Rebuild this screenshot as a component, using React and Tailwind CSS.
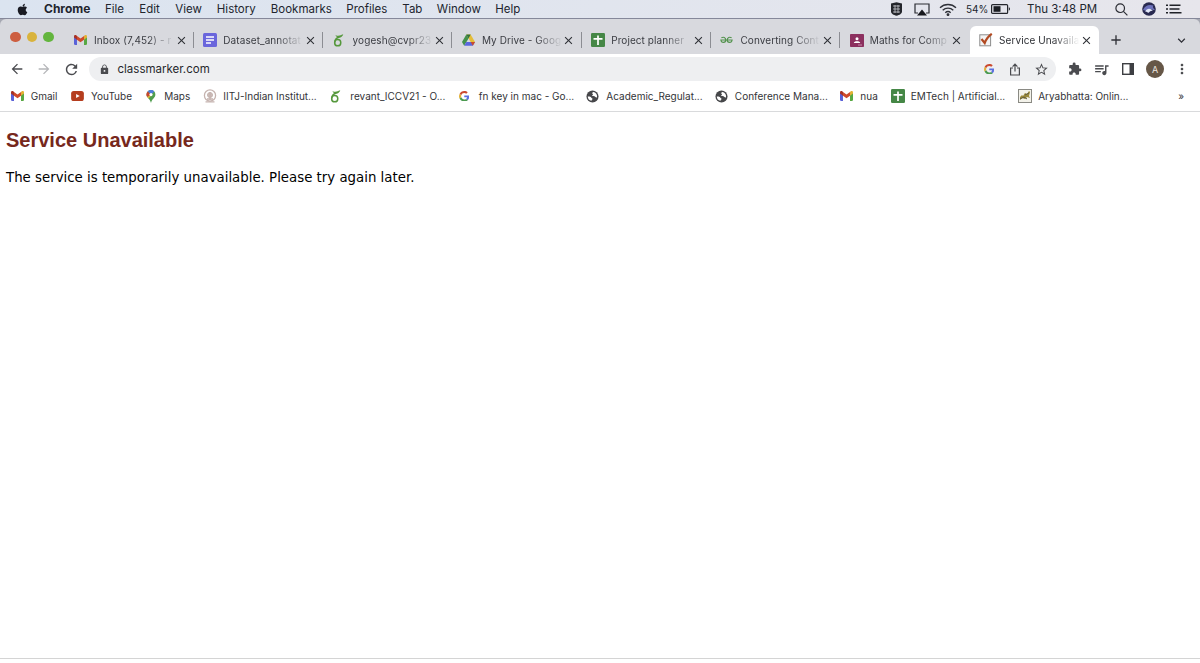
import React from 'react';
import clsx from 'clsx';
import { FaApple } from 'react-icons/fa';
import {
    MdAdd,
    MdArrowBack,
    MdArrowForward,
    MdClose,
    MdExpandMore,
    MdExtension,
    MdLock,
    MdMoreVert,
    MdQueueMusic,
    MdRefresh,
    MdStarBorder,
} from 'react-icons/md';

const GmailIcon = () => (
    <svg viewBox="0 0 24 18" className="w-[13px] h-[10px]">
        <path d="M0 2v14.500c0 .8.7 1.500 1.600 1.500H5.500V7z" fill="#5a62d8" />
        <path d="M18.500 7v11h3.900c.9 0 1.600-.7 1.600-1.500V2z" fill="#57a843" />
        <path d="M18.500 1.500V8.500L24 4.500V2.400c0-2.200-2.500-3.200-4.200-2z" fill="#e3b135" />
        <path d="M5.500 8.500V1.500L12 6.300l6.500-4.800v7L12 13.300z" fill="#cf4a2b" />
        <path d="M0 2.400v2.100l5.500 4v-7L4.200.4C2.500-.8 0 .2 0 2.400z" fill="#a83224" />
    </svg>
);

const DocsIcon = () => (
    <svg viewBox="0 0 14 14" className="size-[14px]">
        <rect width="14" height="14" rx="1.500" fill="#6a66dc" />
        <path d="M3 4h8M3 7h8M3 10h5" stroke="#fff" strokeWidth="1.300" />
    </svg>
);

const OverleafIcon = () => (
    <svg viewBox="0 0 14 16" className="w-[11px] h-[13px]" fill="none" stroke="#55983c">
        <ellipse cx="6" cy="10.800" rx="3.900" ry="4" strokeWidth="1.900" />
        <path d="M2.200 10.500C2 6.500 5 4.500 8 3.500" strokeWidth="1.900" />
        <path d="M3.500 1.800c3 .8 6 .5 9-1.300-.8 3-3.500 4.200-6.500 3.400z" fill="#55983c" strokeWidth=".6" />
    </svg>
);

const DriveIcon = () => (
    <svg viewBox="0 0 24 22" className="w-[13px] h-[12px]">
        <path d="M8 1h8l8 13.500h-8z" fill="#e5bd38" />
        <path d="M8 1l4 7L4 21.500 0 14.500z" fill="#43914b" />
        <path d="M8 14.500h16L20 21.500H4z" fill="#5a67df" />
        <path d="M16 14.500h8L20 21.500z" fill="#ca4b2d" />
        <path d="M8 1h8l-4 7z" fill="#34713a" />
    </svg>
);

const SheetsIcon = () => (
    <svg viewBox="0 0 14 14" className="size-[14px]">
        <rect width="14" height="14" rx="1.200" fill="#458746" />
        <path d="M7 2.500v9.500M2.500 5.800h9" stroke="#fff" strokeWidth="1.700" />
    </svg>
);

const GeeksIcon = () => (
    <svg viewBox="0 0 14 8" className="w-[13px] h-[8px]" fill="none" stroke="#54934f" strokeWidth="1.300">
        <path d="M1.500 1.700C3.500.3 6.200 1.200 6.200 4c0 3.300-4.700 3.800-5.200 0h12c-.5 3.800-5.200 3.300-5.200 0 0-2.800 2.700-3.700 4.700-2.300" />
    </svg>
);

const ClassroomIcon = () => (
    <svg viewBox="0 0 14 13" className="w-[14px] h-[13px]">
        <rect width="14" height="13" rx=".8" fill="#8c305f" />
        <circle cx="7" cy="4.700" r="1.500" fill="#fff" />
        <path d="M3.800 9c0-2.400 6.400-2.400 6.400 0z" fill="#fff" />
        <path d="M8 11h4" stroke="#c98bac" strokeWidth="1" />
    </svg>
);

const CheckIcon = () => (
    <svg viewBox="0 0 14 14" className="size-[14px]">
        <rect x=".8" y="1.800" width="10.800" height="11" fill="#f4f4f4" stroke="#8c8c8c" />
        <path d="M2.500 6l3.200 4C7 6.500 9.500 3 12.800.8" fill="none" stroke="#b24a22" strokeWidth="2.200" />
    </svg>
);

const GoogleIcon = () => (
    <svg viewBox="0 0 48 48" className="size-[10.500px]">
        <path fill="#cb4a2f" d="M24 9.500c3.500 0 6.700 1.200 9.200 3.600l6.900-6.900C35.900 2.400 30.500 0 24 0 14.600 0 6.500 5.400 2.600 13.200l8 6.200C12.400 13.700 17.700 9.500 24 9.500z" />
        <path fill="#5b6fe0" d="M47 24.600c0-1.600-.2-3.100-.4-4.600H24v9h12.900c-.6 3-2.300 5.500-4.800 7.200l7.700 6C44.400 38 47 32 47 24.600z" />
        <path fill="#e2b136" d="M10.500 28.600c-.5-1.500-.8-3-.8-4.600s.3-3.100.8-4.600l-8-6.200C.9 16.500 0 20.100 0 24s.9 7.500 2.600 10.800z" />
        <path fill="#4b9a50" d="M24 48c6.500 0 11.900-2.100 15.900-5.800l-7.700-6c-2.200 1.500-4.900 2.300-8.200 2.300-6.300 0-11.600-4.200-13.500-9.900l-8 6.200C6.500 42.600 14.600 48 24 48z" />
    </svg>
);

const YoutubeIcon = () => (
    <svg viewBox="0 0 14 11" className="w-[13px] h-[10px]">
        <rect width="14" height="11" rx="2.800" fill="#b53d1e" />
        <path d="M5.500 3.200v4.600l4-2.300z" fill="#fff" />
    </svg>
);

const MapsIcon = () => (
    <svg viewBox="0 0 10 14" className="ml-[2px] w-[10px] h-[13px]">
        <path d="M5 0a4.800 4.800 0 0 0-4.700 4.900C.3 8.500 4 9.500 5 14c1-4.500 4.700-5.500 4.700-9.100A4.800 4.800 0 0 0 5 0z" fill="#4f9d4d" />
        <path d="M5 0C3.500 0 2.300.6 1.400 1.600L5 5l3.500-3.500A4.700 4.700 0 0 0 5 0z" fill="#4f7bdc" />
        <path d="M1.400 1.600A4.700 4.700 0 0 0 .9 7.500L5 5z" fill="#c6462f" />
        <path d="M.9 7.500l1.400 1.700L7 4 5 5z" fill="#e0b236" />
        <circle cx="5" cy="4.900" r="1.700" fill="#fff" />
    </svg>
);

const EmblemIcon = () => (
    <svg viewBox="0 0 14 14" className="size-[14px]" fill="none" stroke="#c5b3af">
        <circle cx="7" cy="6.500" r="5.600" strokeWidth="1.300" />
        <circle cx="7" cy="6" r="2.500" fill="#cdbdb9" />
        <path d="M7 3v8M4 10h6M2.500 12.800h9" strokeWidth="1.300" />
    </svg>
);

const AryabhattaIcon = () => (
    <svg viewBox="0 0 14 14" className="size-[14px]">
        <rect x=".5" y=".5" width="13" height="13" fill="#f3f2ea" stroke="#8a8a84" />
        <path d="M2 8l2-2 1 1 2-3 2 1 2-3 1 1-1 4 1 2-3-1-2 2-3-1-2 2z" fill="#9b8a3a" />
        <path d="M2 10l4-2 3 2M7 6l4-2" stroke="#5d5a3c" fill="none" />
    </svg>
);

const GlobeIcon = () => (
    <svg viewBox="0 0 14 14" className="size-[13px]">
        <circle cx="7" cy="7" r="6.500" fill="#46474a" />
        <path d="M8.300 2.200c-1.500.3-2 1.300-1.200 2 .9.700.3 1.500-.8 1.500 0 1 1.700.8 2.700 1 1.200.3 1 1.500 2.900 1.300.4-2.800-1-5-3.600-5.800z" fill="#fff" />
        <path d="M1.900 7c1.500-.2 3.200.1 3.700 1.100.4.9 1.500.5 1.400 1.600-.1.900-1 .9-1 2C3.500 11.200 1.900 9.500 1.900 7z" fill="#fff" />
    </svg>
);

const menuItems = [
    { label: 'File', width: 'w-[34.300px]' },
    { label: 'Edit', width: 'w-[36px]' },
    { label: 'View', width: 'w-[41.500px]' },
    { label: 'History', width: 'w-[54px]' },
    { label: 'Bookmarks', width: 'w-[75.500px]' },
    { label: 'Profiles', width: 'w-[56px]' },
    { label: 'Tab', width: 'w-[34.500px]' },
    { label: 'Window', width: 'w-[58.500px]' },
    { label: 'Help', width: 'w-[40px]' },
];

const tabs = [
    { title: 'Inbox (7,452) - r', icon: GmailIcon },
    { title: 'Dataset_annotat', icon: DocsIcon },
    { title: 'yogesh@cvpr23', icon: OverleafIcon },
    { title: 'My Drive - Goog', icon: DriveIcon },
    { title: 'Project planner', icon: SheetsIcon },
    { title: 'Converting Cont', icon: GeeksIcon },
    { title: 'Maths for Comp', icon: ClassroomIcon },
    { title: 'Service Unavaila', icon: CheckIcon, active: true },
];

const bookmarks = [
    { label: 'Gmail', icon: GmailIcon, width: 'w-[60.300px]' },
    { label: 'YouTube', icon: YoutubeIcon, width: 'w-[73.200px]' },
    { label: 'Maps', icon: MapsIcon, width: 'w-[59.200px]' },
    { label: 'IITJ-Indian Institut...', icon: EmblemIcon, width: 'w-[127px]' },
    { label: 'revant_ICCV21 - O...', icon: OverleafIcon, width: 'w-[128.500px]' },
    { label: 'fn key in mac - Go...', icon: GoogleIcon, width: 'w-[127.500px]' },
    { label: 'Academic_Regulat...', icon: GlobeIcon, width: 'w-[128.500px]' },
    { label: 'Conference Mana...', icon: GlobeIcon, width: 'w-[125.500px]' },
    { label: 'nua', icon: GmailIcon, width: 'w-[50.300px]' },
    { label: 'EMTech | Artificial...', icon: SheetsIcon, width: 'w-[127.500px]' },
    { label: 'Aryabhatta: Onlin...', icon: AryabhattaIcon, width: 'w-[120px]' },
];

const MenuBar = () => (
    <div className="flex h-[18px] shrink-0 items-center bg-gradient-to-r from-[#dbe4f0] to-[#e7e6ec] pl-[15.500px] text-[11.500px] text-[#22252e]">
        <FaApple className="size-[13px] text-[#191b22]" />
        <span className="ml-[15.500px] w-[61px] text-[12px] font-bold">Chrome</span>
        {menuItems.map((item) => (
            <span key={item.label} className={clsx('shrink-0 whitespace-nowrap pt-px', item.width)}>{item.label}</span>
        ))}

        <div className="ml-auto flex items-center">
            <svg viewBox="0 0 13 14" className="w-[13px] h-[14px]">
                <path d="M1 1.500L6.500.3 12 1.500v7.800c0 2.500-2.500 3.700-5.500 4.500C3.500 13 1 11.800 1 9.300z" fill="#24262c" />
                <path d="M3 4h7M3 7h7M3 10h7M5 3v8M8 3v8" stroke="#c9cad0" strokeWidth=".8" />
            </svg>
            <svg viewBox="0 0 16 13" className="ml-[11px] w-[16px] h-[13px]">
                <path d="M4 10H1V1h14v9h-3" fill="none" stroke="#2a2c33" strokeWidth="1.200" />
                <path d="M8 6.500l5 6H3z" fill="#18191e" />
            </svg>
            <svg viewBox="0 0 18 13" className="ml-[9px] w-[18px] h-[13px]" fill="none" stroke="#2f3138" strokeWidth="1.300">
                <path d="M1 4.800c4.500-4.400 11.500-4.400 16 0M3.700 7.300c3-3 7.600-3 10.600 0M6.300 9.700c1.600-1.600 3.800-1.600 5.400 0" />
                <circle cx="9" cy="11.600" r=".8" fill="#2f3138" />
            </svg>
            <span className="ml-[9px] w-[25px] whitespace-nowrap text-[10px]">54%</span>
            <svg viewBox="0 0 20 10" className="w-[20px] h-[10px]">
                <rect x=".6" y=".6" width="16" height="8.800" rx="1" fill="none" stroke="#24262c" strokeWidth="1.200" />
                <rect x="2.500" y="2.200" width="7" height="5.600" fill="#1b1d22" />
                <path d="M17.800 3.300c1.600.3 1.600 3.100 0 3.400z" fill="#24262c" />
            </svg>
            <span className="ml-[16px] w-[88px] whitespace-nowrap pt-px">Thu 3:48 PM</span>
            <svg viewBox="0 0 13 13" className="w-[13px] h-[13px]" fill="none" stroke="#2a2c33" strokeWidth="1.200">
                <circle cx="5.200" cy="5.200" r="4.300" />
                <path d="M8.400 8.400l4 4" />
            </svg>
            <svg viewBox="0 0 14 14" className="ml-[14px] w-[14px] h-[14px]">
                <circle cx="7" cy="7" r="6.800" fill="#292a50" />
                <path d="M1 8c2-4.500 6-6 10.500-4.500C10 5 12 7 13 8c-2 .5-3-1-5-1s-4 2.500-7 1z" fill="#6d72bb" />
                <path d="M3 9.500c2-3 5-4 8-.5-2-.5-3 .5-4 1.500s-2-1.500-4-1z" fill="#e3e9fa" />
            </svg>
            <svg viewBox="0 0 16 10" className="ml-[10px] mr-[18px] w-[16px] h-[10px]" stroke="#1f2127" strokeWidth="1.500">
                <path d="M0 1.200h2M3.500 1.200h11M0 5h2M3.500 5h10M0 8.800h2M3.500 8.800h12" />
            </svg>
        </div>
    </div>
);

const Tab = ({ tab, last }) => {
    const Icon = tab.icon;

    return (
        <div
            className={clsx(
                'relative flex h-[28px] w-[129.300px] shrink-0 items-center pl-[9.500px]',
                tab.active && 'rounded-t-[6px] bg-white'
            )}
        >
            <span className="flex w-[20px] shrink-0"><Icon /></span>
            <span
                className={clsx(
                    'w-[82px] shrink-0 whitespace-nowrap text-[10px] leading-[16px] tracking-[0.080px] [mask-image:linear-gradient(to_right,black_66%,transparent_98%)]',
                    tab.active ? 'text-[#2d2f34]' : 'text-[#3a3c42]'
                )}
            >
                {tab.title}
            </span>
            <MdClose className="ml-[-1.500px] size-[13px] shrink-0 text-[#2f3136]" />
            {!tab.active && !last && <span className="ml-auto h-[16px] w-px bg-[#8c8d93]" />}
        </div>
    );
};

const TabStrip = () => (
    <div className="flex h-[35px] shrink-0 items-end rounded-t-[6px] bg-[#d8d9de]">
        <div className="flex h-[34px] w-[64.500px] shrink-0 items-center gap-[6px] pl-[10px]">
            <span className="size-[10.500px] rounded-full bg-[#cd5f41]" />
            <span className="size-[10.500px] rounded-full bg-[#d9b33c]" />
            <span className="size-[10.500px] rounded-full bg-[#63b53e]" />
        </div>
        {tabs.map((tab, i) => (
            <Tab key={tab.title} tab={tab} last={i === tabs.length - 2} />
        ))}
        <MdAdd className="mb-[6px] ml-[9.500px] size-[16px] text-[#303238]" />
        <MdExpandMore className="mb-[6px] ml-auto mr-[11px] size-[15px] text-[#303238]" />
    </div>
);

const Toolbar = () => (
    <div className="flex h-[30px] shrink-0 items-center bg-white pl-[9px] text-[#4a4b4f]">
        <MdArrowBack className="size-[16px]" />
        <MdArrowForward className="ml-[11px] size-[16px] text-[#b5b6b9]" />
        <MdRefresh className="ml-[10.500px] size-[17px]" />
        <div className="ml-[9.500px] flex h-[24px] w-[967px] items-center rounded-full bg-[#eeeff1] pl-[9.500px]">
            <MdLock className="size-[11px]" />
            <span className="ml-[8px] pt-px text-[11.500px] text-[#27282c]">classmarker.com</span>
            <div className="ml-auto flex items-center pr-[7px]">
                <GoogleIcon />
                <svg viewBox="0 0 12 13" className="ml-[15px] w-[12px] h-[13px]" fill="none" stroke="#4a4b4f" strokeWidth="1.200">
                    <path d="M4 5H1.600v7h8.800V5H8M6 8.500V1.400M3.600 3.600L6 1.200l2.400 2.400" />
                </svg>
                <MdStarBorder className="ml-[13px] size-[15px]" />
            </div>
        </div>
        <MdExtension className="ml-[12px] size-[14px]" />
        <MdQueueMusic className="ml-[11px] size-[17px]" />
        <svg viewBox="0 0 12 12" className="ml-[12px] size-[12px]">
            <rect x=".7" y=".7" width="10.600" height="10.600" fill="none" stroke="#3e3f43" strokeWidth="1.400" />
            <rect x="7.500" y=".7" width="3.800" height="10.600" fill="#3e3f43" />
        </svg>
        <span className="ml-[12px] flex size-[18px] items-center justify-center rounded-full bg-[#665747] text-[9px] text-[#eee8e1]">A</span>
        <MdMoreVert className="ml-[9.500px] size-[16px]" />
    </div>
);

const BookmarksBar = () => (
    <div className="flex h-[28px] shrink-0 items-center border-b border-[#d9dadc] bg-white pb-[3px] pl-[10.700px] text-[10px] text-[#333438]">
        {bookmarks.map((item) => {
            const Icon = item.icon;
            return (
                <div key={item.label} className={clsx('flex shrink-0 items-center', item.width)}>
                    <span className="flex w-[20px] shrink-0"><Icon /></span>
                    <span className="whitespace-nowrap pb-px">{item.label}</span>
                </div>
            );
        })}
        <span className="ml-auto mr-[16px] pb-px">»</span>
    </div>
);

const App = () => {
    return (
        <div className="flex h-[663px] w-[1200px] flex-col overflow-hidden bg-white font-['Inter','Liberation_Sans',sans-serif] leading-none">
            <MenuBar />
            <div className="flex flex-1 flex-col border-t border-[#85889a] bg-[#a6a8b2]">
                <TabStrip />
                <Toolbar />
                <BookmarksBar />
                <main className="flex-1 bg-white pl-[6px] pt-[16px]">
                    <h1 className="font-['Liberation_Sans',Arial,sans-serif] text-[20px] leading-[24px] font-bold text-[#76281c]">
                        Service Unavailable
                    </h1>
                    <p className="mt-[16px] font-['DejaVu_Sans',Verdana,sans-serif] text-[13.330px] leading-[20px] text-black">
                        The service is temporarily unavailable. Please try again later.
                    </p>
                </main>
                <div className="h-[5px] border-t border-[#d4d4d4] bg-white" />
            </div>
        </div>
    );
};

export default App;
